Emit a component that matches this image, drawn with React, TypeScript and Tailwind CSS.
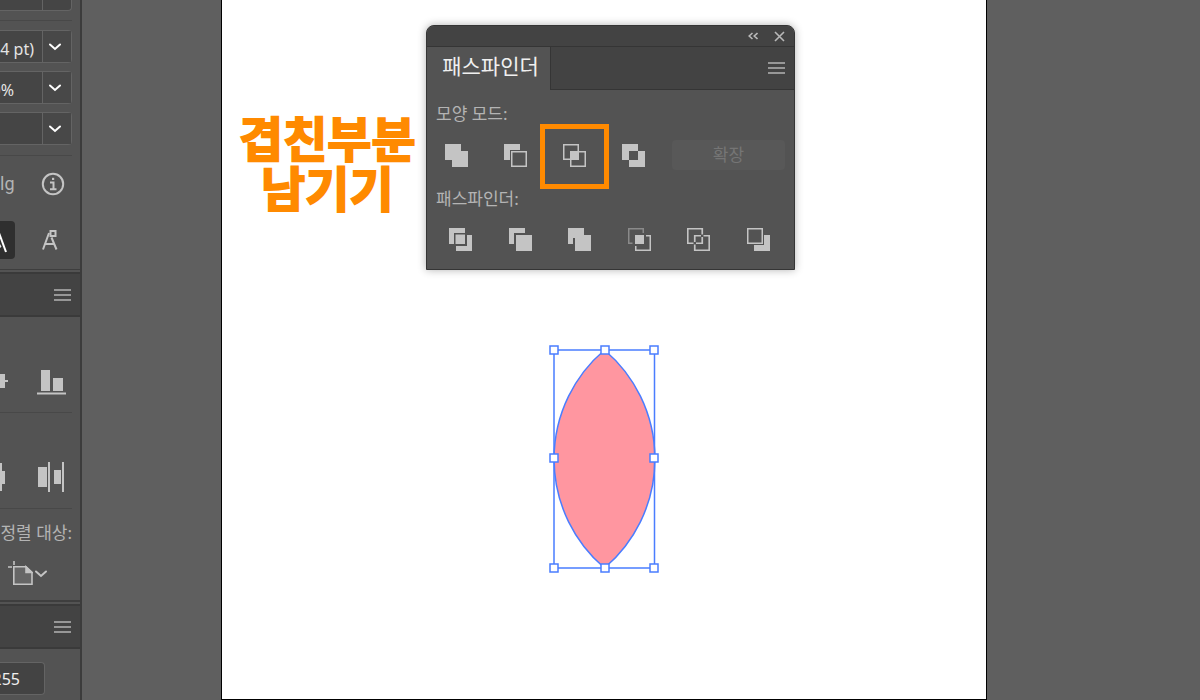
import { useState, type ReactNode } from 'react';

const modes = ['Unite', 'Minus Front', 'Intersect', 'Exclude'];
const pathfinders = ['Divide', 'Trim', 'Merge', 'Crop', 'Outline', 'Minus Back'];

const glyphs: Record<string, ReactNode> = {
  Unite: <path d="M0 0H16V7H23V23H7V16H0Z" />,
  'Minus Front': (
    <>
      <path d="M0 0H16V6H6V16H0Z" />
      <path d="M7.75 7.75H22.25V22.25H7.75Z" fill="none" stroke="currentColor" strokeWidth="1.5" />
    </>
  ),
  Intersect: (
    <>
      <path
        d="M.75 .75H15.25V15.25H.75ZM7.75 7.75H22.25V22.25H7.75Z"
        fill="none"
        stroke="currentColor"
        strokeWidth="1.5"
      />
      <path d="M7 7H16V16H7Z" />
    </>
  ),
  Exclude: <path fillRule="evenodd" d="M0 0H16V7H23V23H7V16H0ZM7 7V16H16V7Z" />,
  Divide: (
    <>
      <path d="M0 0H16V5H5V16H0Z" />
      <path d="M6.5 6.5H16V16H6.5Z" />
      <path d="M18 7H23V23H7V18H18Z" />
    </>
  ),
  Trim: (
    <>
      <path d="M0 0H16V5H5V16H0Z" />
      <path d="M7 7H23V23H7Z" />
    </>
  ),
  Merge: <path d="M0 0H16V7H23V23H7V10H5V16H0Z" />,
  Crop: (
    <>
      <path d="M4.5 15.25H.75V.75H15.25V5" fill="none" stroke="#8a8a8a" strokeWidth="1.5" />
      <path d="M7 7H16V16H7Z" />
      <path d="M18 7.75H22.25V22.25H7.75V18" fill="none" stroke="currentColor" strokeWidth="1.5" />
    </>
  ),
  Outline: (
    <path
      d="M15.25 6.5V.75H.75V15.25H6.5M9 15.25H15.25V9M14 7.75H7.75V14M7.75 16.5V22.25H22.25V7.75H16.5"
      fill="none"
      stroke="currentColor"
      strokeWidth="1.7"
    />
  ),
  'Minus Back': (
    <>
      <path d="M.75 .75H15.25V15.25H.75Z" fill="none" stroke="currentColor" strokeWidth="1.5" />
      <path d="M17 7H23V23H7V17H17Z" />
    </>
  ),
};

function ShapeButton({ name, active }: { name: string; active?: boolean }) {
  return (
    <button aria-label={name} className="relative size-[23px] shrink-0 text-[#c4c4c4]">
      <svg viewBox="0 0 23 23" className="size-[23px]" fill="currentColor">
        {glyphs[name]}
      </svg>
      {active && <span className="absolute -inset-x-[23px] -top-5 -bottom-[22px] border-5 border-[#ff8a00]" />}
    </button>
  );
}

function MenuLines() {
  return (
    <svg viewBox="0 0 17 12" className="h-3 w-[17px] text-[#b4b4b4]" fill="none" stroke="currentColor" strokeWidth="1.5">
      <path d="M0 1H17M0 6H17M0 11H17" />
    </svg>
  );
}

function Chevron() {
  return (
    <svg viewBox="0 0 12 8" className="h-2 w-3" fill="none" stroke="currentColor" strokeWidth="2" strokeLinecap="round">
      <path d="M1 1.5L6 6L11 1.5" />
    </svg>
  );
}

function ComboField({ label, initial }: { label: string; initial: string }) {
  const [value, setValue] = useState(initial);
  return (
    <div className="flex h-[33px] rounded-r border border-l-0 border-[#646464] bg-[#454545]">
      <input
        aria-label={label}
        value={value}
        onChange={(e) => setValue(e.target.value)}
        className={`min-w-0 flex-1 pt-1 text-right text-base text-[#e4e4e4] outline-none ${
          label === 'Scale' ? '-ml-5 pr-7' : 'pr-2'
        }`}
      />
      <button
        aria-label={`${label} options`}
        className="flex w-[29px] shrink-0 items-center justify-center border-l border-[#646464] bg-[#484848] pr-1 text-white"
      >
        <Chevron />
      </button>
    </div>
  );
}

function SectionHeader({ label }: { label: string }) {
  return (
    <div className="flex h-[45px] shrink-0 items-center justify-end border-y-2 border-[#3a3a3a] bg-[#434343] pr-[9px]">
      <button aria-label={label}>
        <MenuLines />
      </button>
    </div>
  );
}

function Sidebar() {
  const [red, setRed] = useState('255');
  return (
    <aside className="flex w-[82px] shrink-0 flex-col overflow-hidden border-r-2 border-[#3c3c3c] bg-[#535353] text-[#c4c4c4]">
      <section className="h-[270px] shrink-0 border-b border-[#3e3e3e] pr-2">
        <div className="flex h-[11px] justify-end rounded-br border-r border-b border-[#646464] bg-[#454545]">
          <div className="w-[29px] border-l border-[#646464]" />
        </div>
        <hr className="mt-[9px] mb-[9px] border-[#484848]" />
        <div className="flex flex-col gap-2">
          <ComboField label="Leading" initial="4 pt)" />
          <ComboField label="Scale" initial="0%" />
          <ComboField label="Tracking" initial="" />
        </div>
        <hr className="mt-[10px] border-[#484848]" />
        <div className="mt-2 flex h-10 items-center justify-between pr-[7px]">
          <span className="font-['Roboto',sans-serif] text-lg text-[#b4b4b4]">lg</span>
          <button aria-label="Info">
            <svg viewBox="0 0 24 24" className="size-6" fill="none" stroke="currentColor" strokeWidth="2">
              <circle cx="12" cy="12" r="10.2" />
              <path d="M9 10.5H12.5V17M9 17.2H15.5" />
              <path d="M11 5.8H13.2V8H11Z" fill="currentColor" stroke="none" />
            </svg>
          </button>
        </div>
        <div className="mt-[17px] flex h-[38px] items-center justify-between pr-[14px]">
          <button aria-label="Glyph snap" className="h-[38px] w-[15px] rounded-r bg-[#2f2f2f] text-white">
            <svg viewBox="0 0 15 38" className="h-[38px] w-[15px]" fill="none" stroke="currentColor">
              <path d="M-1 12L6 31" strokeWidth="2" />
              <path d="M-1 26H1L-1 22" strokeWidth="1" />
            </svg>
          </button>
          <button aria-label="Anchor snap">
            <svg viewBox="0 0 16 20" className="h-5 w-4" fill="none" stroke="currentColor" strokeWidth="2">
              <path d="M1 19.5L7 3M9.5 7.5L14.5 19.5M3 14H12" />
              <path d="M8.5 1H13.5V6H8.5Z" />
            </svg>
          </button>
        </div>
      </section>

      <div className="mt-[2px]">
        <SectionHeader label="Align menu" />
      </div>
      <section className="h-[285px] shrink-0 border-b-2 border-[#3e3e3e] pr-2">
        <div className="flex h-24 items-end justify-between border-b border-[#484848] pr-[6px] pb-[17px]">
          <button aria-label="Align middle">
            <svg viewBox="0 0 8 26" className="h-[26px] w-2" fill="currentColor">
              <path d="M0 5H5V11H8V13H5V19H0Z" />
            </svg>
          </button>
          <button aria-label="Align bottom">
            <svg viewBox="0 0 29 26" className="h-[26px] w-[29px]" fill="currentColor">
              <path d="M4 1H13V22H4ZM16 9H26V22H16ZM0 23.5H29V25.5H0Z" />
            </svg>
          </button>
        </div>
        <div className="flex h-24 items-center justify-between border-b border-[#484848] pt-8 pr-2">
          <button aria-label="Distribute center">
            <svg viewBox="0 0 5 30" className="h-[30px] w-[5px]" fill="currentColor">
              <path d="M0 1H2V9H5V22H2V29H0Z" />
            </svg>
          </button>
          <button aria-label="Distribute right">
            <svg viewBox="0 0 26 30" className="h-[30px] w-[26px]" fill="currentColor">
              <path d="M0 5H9V25H0ZM10 0H12V30H10ZM16 8H23V22H16ZM24 0H26V30H24Z" />
            </svg>
          </button>
        </div>
        <p className="mt-3 h-6 text-right text-[17px] leading-6 whitespace-nowrap text-[#b4b4b4]">정렬 대상:</p>
        <button aria-label="Align to" className="mt-4 ml-2 flex items-center gap-[2px]">
          <svg viewBox="0 0 25 25" className="size-[25px]" fill="none" stroke="currentColor" strokeWidth="1.6">
            <path d="M0 6H4M6 0V4" />
            <path d="M5.8 5.8H18L24 11.5V23.2H5.8Z" fill="#666666" />
            <path d="M18 5.8V11.5H24Z" fill="currentColor" />
          </svg>
          <Chevron />
        </button>
      </section>

      <div className="mt-[2px]">
        <SectionHeader label="Color menu" />
      </div>
      <section className="shrink-0 pt-[13px]">
        <input
          aria-label="Red"
          value={red}
          onChange={(e) => setRed(e.target.value)}
          className="-ml-6 h-[33px] w-[69px] rounded-r border border-l-0 border-[#646464] bg-[#434343] pr-6 text-right text-base text-[#f0f0f0] outline-none"
        />
      </section>
    </aside>
  );
}

function PathfinderPanel() {
  return (
    <section className="absolute top-[25px] left-[204px] w-[369px] rounded-t-lg border border-[#353535] bg-[#535353] shadow-[0_0_8px_rgba(0,0,0,0.3)]">
      <header className="flex h-[21px] items-center justify-end gap-4 rounded-t-lg border-b border-[#353535] bg-[#434343] pr-[9px] text-[#b8b8b8]">
        <button aria-label="Collapse">
          <svg viewBox="0 0 10 8" className="h-2 w-[10px]" fill="none" stroke="currentColor" strokeWidth="1.6">
            <path d="M4.5 1L1.2 4L4.5 7M9.5 1L6.2 4L9.5 7" />
          </svg>
        </button>
        <button aria-label="Close">
          <svg viewBox="0 0 11 11" className="size-[11px]" fill="none" stroke="currentColor" strokeWidth="1.6">
            <path d="M1 1L10 10M10 1L1 10" />
          </svg>
        </button>
      </header>
      <div className="flex h-[43px] bg-[#434343]">
        <button className="w-[124px] shrink-0 border-r border-[#353535] bg-[#535353] pb-1 pl-1 text-[21px] whitespace-nowrap text-[#f0f0f0]">
          패스파인더
        </button>
        <div className="flex flex-1 items-center justify-end border-b border-[#353535] pr-[9px]">
          <button aria-label="Panel menu">
            <MenuLines />
          </button>
        </div>
      </div>
      <div className="pt-3 pb-[18px]">
        <h2 className="pl-[9px] text-[17px] leading-6 text-[#b4b4b4]">모양 모드:</h2>
        <div className="mt-[14px] flex items-center pr-[9px] pl-[18px]">
          <div className="flex gap-9">
            {modes.map((name) => (
              <ShapeButton key={name} name={name} active={name === 'Intersect'} />
            ))}
          </div>
          <button disabled className="ml-[27px] h-[30px] flex-1 rounded-sm bg-[#585858] text-[17px] text-[#757575]">
            확장
          </button>
        </div>
        <h2 className="mt-[17px] pl-[9px] text-[17px] leading-6 text-[#b4b4b4]">패스파인더:</h2>
        <div className="mt-[17px] flex justify-between pr-6 pl-[22px]">
          {pathfinders.map((name) => (
            <ShapeButton key={name} name={name} />
          ))}
        </div>
      </div>
    </section>
  );
}

function SelectedShape() {
  const handles = [
    [6, 7],
    [57, 7],
    [106, 7],
    [6, 115],
    [106, 115],
    [6, 225],
    [57, 225],
    [106, 225],
  ];
  return (
    <svg viewBox="0 0 112 232" className="absolute top-[343px] left-[326px] h-[232px] w-28" stroke="#4a7dff" strokeWidth="1.5">
      <path d="M56.5 7A143 143 0 0 1 56.5 225A143 143 0 0 1 56.5 7Z" fill="#ff96a0" />
      <path d="M6 7H106.5V225H6Z" fill="none" />
      {handles.map(([x, y]) => (
        <rect key={`${x}-${y}`} x={x - 4} y={y - 4} width="8" height="8" fill="white" />
      ))}
    </svg>
  );
}

export default function App() {
  return (
    <div className="flex h-screen overflow-hidden bg-[#5f5f5f] font-['Noto_Sans','Noto_Sans_CJK_KR',sans-serif]">
      <Sidebar />
      <main className="flex-1 pr-[213px] pl-[139px]">
        <div className="relative h-full border border-t-0 border-black bg-white">
          <h1 className="absolute top-[116px] left-[17px] text-center font-['Liberation_Sans','Noto_Sans_CJK_KR',sans-serif] text-5xl leading-[50px] font-bold whitespace-nowrap text-[#ff8a00] [-webkit-text-stroke:2px_#ff8a00]">
            겹친부분
            <br />
            남기기
          </h1>
          <PathfinderPanel />
          <SelectedShape />
        </div>
      </main>
    </div>
  );
}
